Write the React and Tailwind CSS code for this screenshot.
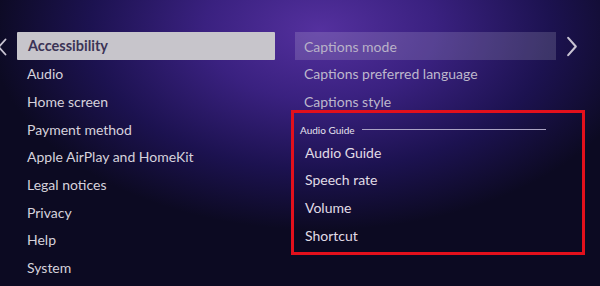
import React from 'react';

const leftItems = [
  'Audio',
  'Home screen',
  'Payment method',
  'Apple AirPlay and HomeKit',
  'Legal notices',
  'Privacy',
  'Help',
  'System',
];

const guideItems = ['Audio Guide', 'Speech rate', 'Volume', 'Shortcut'];

function Chevron({ dir, className }) {
  const pts = dir === 'left' ? '9,2 1,11 9,20' : '2,2 10,11 2,20';
  return (
    <svg viewBox="0 0 12 22" className={className} fill="none">
      <polyline points={pts} stroke="#c9c4d3" strokeWidth="2.2" strokeLinecap="round" strokeLinejoin="round" />
    </svg>
  );
}

export default function App() {
  return (
    <div
      className="relative w-[600px] h-[286px] overflow-hidden bg-[#0c0a1e] text-[14px]"
      style={{
        fontFamily: 'Lato, "Liberation Sans", sans-serif',
        backgroundImage:
          'radial-gradient(ellipse 330px 200px at 320px 30px, #54309e 0%, #3a2180 35%, #1c1250 70%, #0c0a22 100%)',
      }}
    >
      <Chevron dir="left" className="absolute left-[-2px] top-[37px] w-[10px] h-[20px]" />
      <Chevron dir="right" className="absolute left-[566px] top-[36px] w-[12px] h-[21px]" />

      <div className="flex pt-[32px]">
        <div className="ml-[17px] w-[258px] flex flex-col">
          <div className="h-[28px] flex items-center pl-[11px] bg-[#c7c5cb] rounded-[1px] text-[#3b3456] text-[14.5px] font-bold">
            Accessibility
          </div>
          {leftItems.map((t) => (
            <div key={t} className="h-[27.7px] flex items-center pl-[10px] text-[#d6d2dc]">
              {t}
            </div>
          ))}
        </div>

        <div className="ml-[16px] w-[294px] flex flex-col">
          <div className="ml-[4px] w-[261px] h-[28px] flex items-center pl-[9px] bg-white/15 text-[#b9b2c8]">
            Captions mode
          </div>
          <div className="h-[27.7px] flex items-center pl-[13px] text-[#bdb7cc]">Captions preferred language</div>
          <div className="h-[27.7px] flex items-center pl-[13px] text-[#bdb7cc]">Captions style</div>

          <div className="mt-[-5px] border-[3px] border-[#e3101c] pb-[3px]">
            <div className="pt-[8px] pl-[6px] flex items-center h-[25px]">
              <span className="text-[10px] leading-[12px] text-[#e6e2ee]">Audio Guide</span>
              <div className="ml-[7px] w-[184px] h-px bg-[#aaa3c4]" />
            </div>
            {guideItems.map((t) => (
              <div key={t} className="h-[27.7px] flex items-center pl-[11px] text-[#e0dce6]">
                {t}
              </div>
            ))}
          </div>
        </div>
      </div>
    </div>
  );
}
